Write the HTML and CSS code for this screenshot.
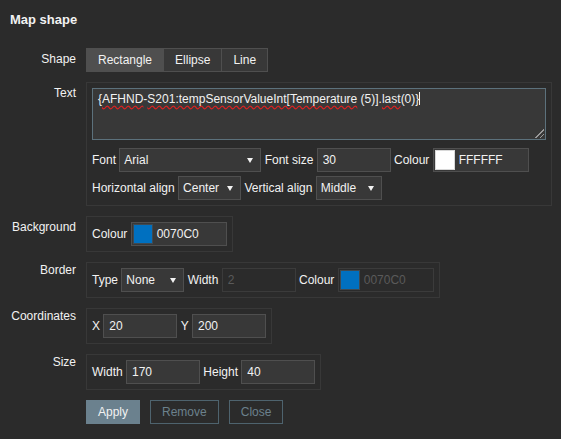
FILE: index.html
```html
<!DOCTYPE html>
<html lang="en">
<head>
	<meta charset="UTF-8">
	<title>Map shape</title>
	<link rel="stylesheet" href="styles.css">
</head>
<body>
	<h4 class="title">Map shape</h4>

	<div class="form">
		<div class="lbl">Shape</div>
		<div class="field">
			<div class="radios">
				<span class="on">Rectangle</span>
				<span>Ellipse</span>
				<span>Line</span>
			</div>
		</div>

		<div class="lbl">Text</div>
		<div class="field">
			<div class="box box-text">
				<div class="area">{<u>AFHND</u>-<u>S201:tempSensorValueInt[Temperature</u> (5)].<u>last</u>(0)}<span class="caret"></span></div>
				<div class="row first">
					<span>Font</span>
					<div class="sel w-font">Arial<i></i></div>
					<span>Font size</span>
					<input class="inp" type="text" value="30">
					<span>Colour</span>
					<div class="color"><b class="sw white"></b>FFFFFF</div>
				</div>
				<div class="row">
					<span>Horizontal align</span>
					<div class="sel w-halign">Center<i></i></div>
					<span>Vertical align</span>
					<div class="sel w-valign">Middle<i></i></div>
				</div>
			</div>
		</div>

		<div class="lbl">Background</div>
		<div class="field">
			<div class="box row">
				<span>Colour</span>
				<div class="color"><b class="sw"></b>0070C0</div>
			</div>
		</div>

		<div class="lbl high">Border</div>
		<div class="field">
			<div class="box row">
				<span>Type</span>
				<div class="sel w-type">None<i></i></div>
				<span>Width</span>
				<input class="inp" type="text" value="2" disabled>
				<span>Colour</span>
				<div class="color off"><b class="sw"></b>0070C0</div>
			</div>
		</div>

		<div class="lbl high">Coordinates</div>
		<div class="field">
			<div class="box row">
				<span>X</span>
				<input class="inp" type="text" value="20">
				<span>Y</span>
				<input class="inp" type="text" value="200">
			</div>
		</div>

		<div class="lbl high">Size</div>
		<div class="field">
			<div class="box row">
				<span>Width</span>
				<input class="inp" type="text" value="170">
				<span>Height</span>
				<input class="inp" type="text" value="40">
			</div>
		</div>

		<div></div>
		<div class="field buttons">
			<button class="btn">Apply</button>
			<button class="btn alt">Remove</button>
			<button class="btn alt">Close</button>
		</div>
	</div>
</body>
</html>
```

FILE: styles.css
```css
*{
	box-sizing: border-box;
}
body{
	margin: 0;
	background: #2b2b2b;
	color: #f2f2f2;
	font-family: "Liberation Sans", Arial, sans-serif;
	font-size: 12px;
	line-height: 14px;
}
.title{
	margin: 12px 0 0 10px;
	font-size: 13px;
	line-height: 16px;
	font-weight: bold;
}
.form{
	display: grid;
	grid-template-columns: 76px max-content;
	column-gap: 10px;
	row-gap: 10px;
	margin-top: 20px;
}
.lbl{
	text-align: right;
	padding-top: 4px;
	white-space: nowrap;
}
.lbl.high{
	padding-top: 1px;
}
.field{
	justify-self: start;
}

/* shape switch */
.radios{
	display: flex;
}
.radios span{
	height: 24px;
	line-height: 22px;
	padding: 0 11px;
	border: 1px solid #4f4f4f;
	background: #383838;
	margin-left: -1px;
}
.radios span:first-child{
	margin-left: 0;
}
.radios span.on{
	background: #4f4f4f;
}

/* fieldsets */
.box{
	border: 1px solid #383838;
	padding: 5px;
}
.box-text{
	width: 466px;
}
.row{
	display: flex;
	align-items: center;
	gap: 3.33px;
	height: 24px;
	box-sizing: content-box;
}
.row.first{
	margin-top: 8px;
}
.row + .row{
	margin-top: 4px;
}
.area{
	position: relative;
	width: 454px;
	height: 52px;
	padding: 3px 5px;
	background: #383838;
	border: 1px solid #5c717c;
	white-space: nowrap;
}
.area u{
	text-decoration: underline wavy #e02020;
	text-decoration-skip-ink: none;
	text-underline-offset: 2px;
}
.area::after{
	content: "";
	position: absolute;
	right: 1px;
	bottom: 1px;
	width: 9px;
	height: 9px;
	background: linear-gradient(135deg, transparent 48%, #9a9a9a 48%, #9a9a9a 56%, transparent 56%, transparent 74%, #9a9a9a 74%, #9a9a9a 82%, transparent 82%);
}
.caret{
	display: inline-block;
	width: 1px;
	height: 13px;
	background: #f2f2f2;
	vertical-align: -2px;
}

/* controls */
.inp{
	width: 74px;
	height: 24px;
	padding: 0 5px;
	border: 1px solid #4f4f4f;
	background: #383838;
	color: #f2f2f2;
	font: inherit;
	outline: none;
}
.inp:disabled{
	background: #2b2b2b;
	border-color: #3b3b3b;
	color: #5a5a5a;
}
.sel{
	display: flex;
	align-items: center;
	height: 24px;
	padding: 0 7px 0 4px;
	border: 1px solid #4f4f4f;
	background: #383838;
}
.sel i{
	margin-left: auto;
	border-left: 3px solid transparent;
	border-right: 3px solid transparent;
	border-top: 5px solid #f2f2f2;
}
.w-font{ width: 142px; }
.w-halign{ width: 63px; }
.w-valign{ width: 66px; }
.w-type{ width: 63px; }

.color{
	display: flex;
	align-items: center;
	width: 96px;
	height: 24px;
	padding-left: 1px;
	border: 1px solid #4f4f4f;
	background: #383838;
}
.sw{
	width: 20px;
	height: 20px;
	margin-right: 4px;
	background: #0070c0;
	border: 1px solid #3f4a52;
}
.sw.white{
	background: #ffffff;
	border-color: #d8d8d8;
}
.color.off{
	background: #2b2b2b;
	border-color: #3b3b3b;
	color: #5a5a5a;
}

/* buttons */
.buttons{
	display: flex;
	gap: 10px;
}
.btn{
	height: 24px;
	padding: 0 11px;
	border: 1px solid #6b818e;
	background: #6b818e;
	color: #f2f2f2;
	font: inherit;
	line-height: 22px;
}
.btn.alt{
	background: transparent;
	border-color: #4e636e;
	color: #6b818d;
}
```
